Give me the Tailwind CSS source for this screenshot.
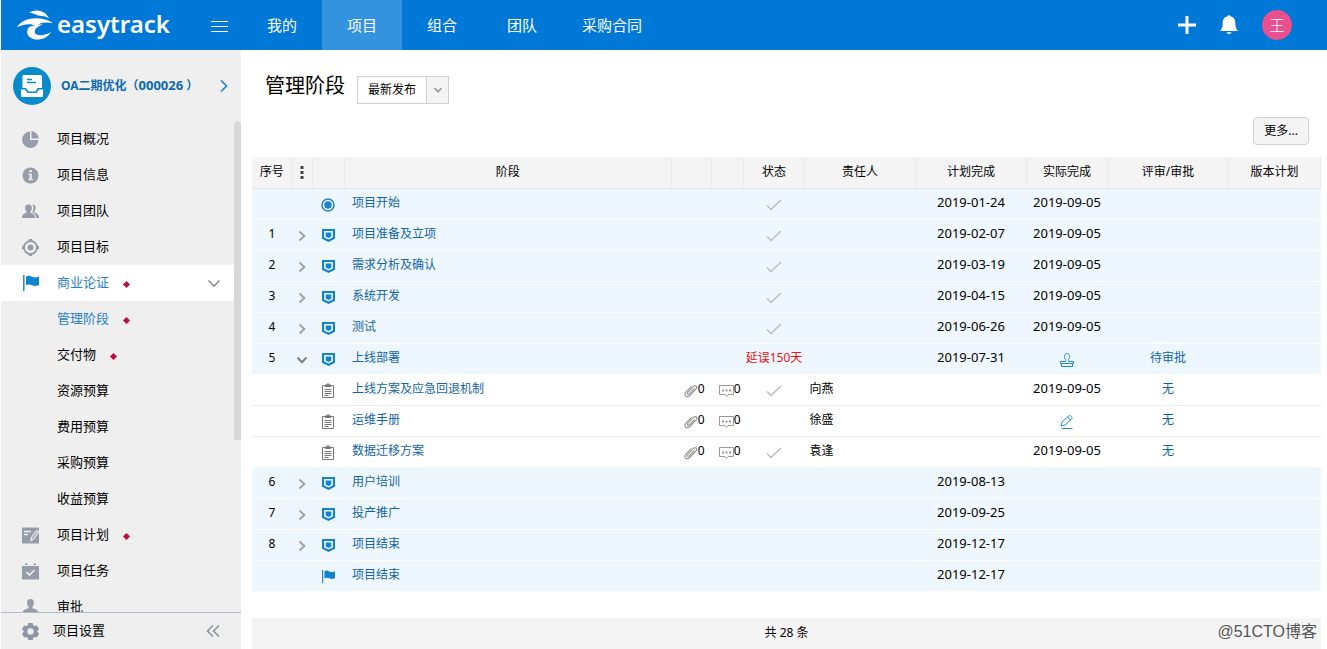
<!DOCTYPE html>
<html lang="zh-CN">
<head>
<meta charset="utf-8">
<title>管理阶段 - easytrack</title>
<script src="https://cdn.jsdelivr.net/npm/@tailwindcss/browser@4"></script>
</head>
<body class="h-screen overflow-hidden bg-white pl-px font-['Noto_Sans','Noto_Sans_CJK_SC',sans-serif] text-[13px] text-black">
<svg class="hidden">
  <symbol id="chev" viewBox="0 0 10 12"><path d="M2.5 1.5 7.3 6 2.5 10.5" fill="none" stroke="currentColor" stroke-width="2"/></symbol>
  <symbol id="down" viewBox="0 0 12 10"><path d="M1.5 2.5 6 7.3 10.5 2.5" fill="none" stroke="currentColor" stroke-width="2"/></symbol>
  <symbol id="stage" viewBox="0 0 14 14"><path d="M0 0h14v10.5L7 14 0 10.5zM2.300 2.200v6.900L7 11.400l4.700-2.300V2.200z" fill="currentColor" fill-rule="evenodd"/><path d="M4 3.800h6v4.400L7 9.600 4 8.200z" fill="currentColor"/></symbol>
  <symbol id="start" viewBox="0 0 14 14"><circle cx="7" cy="7" r="6" fill="none" stroke="currentColor" stroke-width="1.500"/><circle cx="7" cy="7" r="3.700" fill="currentColor"/></symbol>
  <symbol id="flag" viewBox="0 0 16 16"><path d="M.8 0v16" stroke="currentColor" stroke-width="1.400"/><path d="M3 1.500c2-1.300 4-.8 6 .2s4 1 7-.2v8.500c-3 1.300-5 1.200-7 .3s-4-1.200-6 0z" fill="currentColor"/></symbol>
  <symbol id="doc" viewBox="0 0 14 15"><g fill="none" stroke="currentColor"><path d="M4 2.500H1.500v12h11v-12H10M3.500 6.500h7M3.500 8.500h7M3.500 10.500h7M3.500 12.500h4"/></g><path d="M4 1.500h1.800V.5h2.400v1H10V4H4z" fill="currentColor"/></symbol>
  <symbol id="check" viewBox="0 0 16 12"><path d="m1 6.500 4 4L15 1" fill="none" stroke="currentColor" stroke-width="1.500"/></symbol>
  <symbol id="clip" viewBox="0 0 14 14"><path d="m10.500 4.500-5.200 5.300c-1.400 1.300-2.900-.2-1.600-1.500l5.600-5.700c2.300-2.200 4.800.3 2.700 2.600l-6.200 6.300c-3.200 3-6.600-.4-3.700-3.600L7.500 2.400" fill="none" stroke="currentColor" stroke-width="1.200"/></symbol>
  <symbol id="msg" viewBox="0 0 15 14"><path d="M.5 1.500h14v9H9l-1.500 2-1.500-2H.5z" fill="none" stroke="currentColor"/><path d="M3 5.500h2v2H3zM6.500 5.500h2v2h-2zM10 5.500h2v2h-2z" fill="currentColor"/></symbol>
</svg>
<div class="flex h-full flex-col">
  <header class="flex h-[50px] shrink-0 items-center bg-[#0078d7] text-white">
    <a href="#" class="flex w-[210px] items-center pl-4">
      <svg class="h-8 w-10 shrink-0" viewBox="0 0 40 32" fill="#fff"><path d="M12 3.500C20-1 29 2 32 9.500c-4-3.500-7-1.500-11-3-3-1.300-6-2.500-9-3z"/><path d="M0 18C6 9 22 6 36 14c-8-1-12-1-17 3-5-3-12-2-19 1z"/><path d="M12 18c5-2 9-2.500 14-2.500-7 2.500-9 5.500-8 8.500s10 3 16-1c-4 8-17 10-22 4.500-3-3.500-2-6.500 0-9.500z"/></svg>
      <span class="-mt-0.5 text-2xl font-semibold">easytrack</span>
    </a>
    <button aria-label="菜单" class="w-[31px]"><svg class="mt-px h-3 w-[17px]" viewBox="0 0 17 12"><path d="M0 1.500h17M0 6.500h17M0 11.500h17" stroke="#fff"/></svg></button>
    <nav class="flex h-full flex-1 text-[15px]">
      <a href="#" class="flex min-w-20 items-center justify-center px-5">我的</a>
      <a href="#" class="flex min-w-20 items-center justify-center bg-[#3393df] px-5">项目</a>
      <a href="#" class="flex min-w-20 items-center justify-center px-5">组合</a>
      <a href="#" class="flex min-w-20 items-center justify-center px-5">团队</a>
      <a href="#" class="flex min-w-20 items-center justify-center px-5">采购合同</a>
    </nav>
    <div class="flex items-center gap-6 pr-[35px]">
      <button aria-label="新增"><svg class="block size-[18px]" viewBox="0 0 18 18"><path d="M9 0v18M0 9h18" stroke="#fff" stroke-width="3"/></svg></button>
      <button aria-label="通知"><svg class="block h-5 w-[18px]" viewBox="0 0 18 20" fill="#fff"><path d="M7.500 1.200C7.700-.1 10.300-.1 10.500 1.200 14 2 15.300 4.500 15.300 8c0 4 .8 5.500 2.500 8H.2c1.700-2.500 2.500-4 2.500-8 0-3.500 1.300-6 4.800-6.800zM6.500 17.200h5c-.5 2.300-4.500 2.300-5 0z"/></svg></button>
      <button class="size-[30px] rounded-full bg-[#ea5090] text-[15px] font-light">王</button>
    </div>
  </header>
  <div class="flex min-h-0 flex-1">
    <aside class="flex w-60 shrink-0 flex-col bg-[#efefef]">
      <a href="#" class="flex h-[71px] shrink-0 items-center pr-3 pl-3 font-bold text-[#0c6bb0]">
        <svg class="mr-[10px] size-[38px] shrink-0" viewBox="0 0 38 38"><circle cx="19" cy="19" r="19" fill="#088acb"/><path d="M10.500 8h17q1.500 0 1.500 1.500V21h-4.500l-2 3.500h-7L13 21H9.500V9.500Q9.500 8 10.500 8z" fill="#fff"/><path d="M14 12.500h5M14 15.500h9" stroke="#088acb" stroke-width="1.300"/><path d="M8 22.500h4l2.500 3.500h9l2.500-3.500h4V30H8z" fill="#fff"/></svg>
        <span class="flex-1 text-xs whitespace-nowrap">OA二期优化（<span class="text-[13px]">000026</span> ）</span>
        <svg class="h-[14px] w-[10px] text-[#2b80c4]" viewBox="0 0 10 14"><path d="m2 1.500 5.500 5.500L2 12.500" fill="none" stroke="currentColor" stroke-width="1.700"/></svg>
      </a>
      <div class="flex min-h-0 flex-1 overflow-hidden">
        <nav class="flex-1">
          <a href="#" class="flex h-9 items-center pl-[21px]"><svg class="mr-[18px] size-[17px] text-[#979da8]" viewBox="0 0 17 17" fill="currentColor"><path d="M8 .5V9h8.500A8.200 8.200 0 1 1 8 .5z"/><path d="M9.500 0a8 8 0 0 1 7.200 7.500H9.500z"/></svg>项目概况</a>
          <a href="#" class="flex h-9 items-center pl-[21px]"><svg class="mr-[18px] size-[17px] text-[#979da8]" viewBox="0 0 17 17"><circle cx="8.500" cy="8.500" r="8" fill="currentColor"/><path d="M7.300 3h2.500v2.200H7.300zM6.300 6.700h3.500v5.200H11v1.300H6.300v-1.300h1.200V8H6.300z" fill="#efefef"/></svg>项目信息</a>
          <a href="#" class="flex h-9 items-center pl-[21px]"><svg class="mr-[18px] size-[17px] text-[#979da8]" viewBox="0 0 17 17" fill="currentColor"><path d="M6.500 1.500c2.300 0 3.500 1.500 3.300 3.500-.1 1.500-.6 2.500-1.300 3.300v1.500c1.800.8 4.500 1.400 4.500 5.200H0c0-3.800 2.700-4.400 4.500-5.200V8.300C3.700 7.500 3.300 6.500 3.200 5c-.1-2 1-3.500 3.300-3.500z"/><path d="M10.500 1.500c4.200.2 3.700 5 1.700 7v1c2.200.8 4.800 1.500 4.800 5.500h-3c0-3-1.300-4.500-3.800-5.500 1.200-2.500 2-5.500.3-8z"/></svg>项目团队</a>
          <a href="#" class="flex h-9 items-center pl-[21px]"><svg class="mr-[18px] size-[17px] text-[#979da8]" viewBox="0 0 17 17"><circle cx="8.500" cy="8.500" r="6.500" fill="none" stroke="currentColor" stroke-width="2"/><circle cx="8.500" cy="8.500" r="3" fill="currentColor"/><path d="M8.500 0v2.500M8.500 14.500V17M0 8.500h2.500M14.500 8.500H17" stroke="currentColor" stroke-width="3"/></svg>项目目标</a>
          <a href="#" class="flex h-9 items-center bg-white pr-3 pl-[22px] text-[#2480c8]"><svg class="mr-[18px] size-4 text-[#0f84d0]"><use href="#flag"/></svg>商业论证<i class="mt-0.5 ml-[15px] size-[5px] rotate-45 bg-[#c00d3f]"></i><svg class="ml-auto h-4 w-4 text-[#8a8f96]" viewBox="0 0 16 16"><path d="m2.500 5.500 5.500 5.500 5.500-5.500" fill="none" stroke="currentColor" stroke-width="1.600"/></svg></a>
          <a href="#" class="flex h-9 items-center pl-14 text-[#2480c8]">管理阶段<i class="mt-0.5 ml-[15px] size-[5px] rotate-45 bg-[#c00d3f]"></i></a>
          <a href="#" class="flex h-9 items-center pl-14">交付物<i class="mt-0.5 ml-[15px] size-[5px] rotate-45 bg-[#c00d3f]"></i></a>
          <a href="#" class="flex h-9 items-center pl-14">资源预算</a>
          <a href="#" class="flex h-9 items-center pl-14">费用预算</a>
          <a href="#" class="flex h-9 items-center pl-14">采购预算</a>
          <a href="#" class="flex h-9 items-center pl-14">收益预算</a>
          <a href="#" class="flex h-9 items-center pl-[21px]"><svg class="mr-[18px] size-[17px] text-[#979da8]" viewBox="0 0 17 17"><path d="M0 .5h17v16H0z" fill="currentColor"/><path d="M2 4.500h7M2 7.500h4" stroke="#efefef" stroke-width="1.300"/><path d="m9 13.500.6-3L14 4.300c1-1 2.700 0 2 1.400L11.500 12z" fill="none" stroke="#efefef" stroke-width="1.200"/></svg>项目计划<i class="mt-0.5 ml-[15px] size-[5px] rotate-45 bg-[#c00d3f]"></i></a>
          <a href="#" class="flex h-9 items-center pl-[21px]"><svg class="mr-[18px] size-[17px] text-[#979da8]" viewBox="0 0 17 17"><path d="M0 3h17v13.500H0zM3 .5h2.500V2H3zM11.500.5H14V2h-2.500z" fill="currentColor"/><path d="m4.500 9 3 3 5-5" fill="none" stroke="#efefef" stroke-width="1.600"/></svg>项目任务</a>
          <a href="#" class="flex h-9 items-center pl-[21px]"><svg class="mr-[18px] size-[17px] text-[#979da8]" viewBox="0 0 17 17" fill="currentColor"><path d="M8.500 0c2.500 0 3.700 1.700 3.500 3.700-.2 2-.8 3-1.500 3.800v1.800c2 1 5.500 1 6 4.700V17H.5v-3c.5-3.700 4-3.700 6-4.700V7.500C5.800 6.700 5.200 5.700 5 3.700 4.800 1.700 6 0 8.500 0z"/></svg>审批</a>
        </nav>
        <div class="h-[319px] w-[7px] rounded-t bg-[#d8d8d8]"></div>
      </div>
      <div class="flex h-[37px] shrink-0 items-center border-t border-[#b4b9cb] pr-[21px] pl-[21px]">
        <a href="#" class="flex items-center"><svg class="mr-[14px] size-[17px] text-[#8f96a3]" viewBox="0 0 17 17"><path d="m6.300 0h4.400l.6 2.300 1.300.8 2.300-.7 2.100 3.700L15.400 8v1.100l1.600 1.700-2.100 3.700-2.300-.6-1.300.8-.6 2.300H6.300l-.6-2.300-1.300-.8-2.300.6L0 10.800l1.600-1.700V8L0 6.100l2.100-3.700 2.300.7 1.300-.8zM8.500 5.300a3.200 3.200 0 1 0 0 6.400 3.200 3.200 0 0 0 0-6.400z" fill="currentColor" fill-rule="evenodd"/></svg>项目设置</a>
        <button aria-label="收起" class="ml-auto text-[#8a8f9a]"><svg class="block h-3 w-[14px]" viewBox="0 0 14 12"><path d="M7 .5 1.500 6 7 11.500M13 .5 7.500 6l5.500 5.500" fill="none" stroke="currentColor" stroke-width="1.500"/></svg></button>
      </div>
    </aside>
    <main class="flex min-w-0 flex-1 flex-col pr-[6px] pl-[11px]">
      <div class="flex h-[67px] shrink-0 items-center pt-1 pl-[13px]">
        <h1 class="mr-3 text-xl">管理阶段</h1>
        <div class="relative mt-2">
          <select aria-label="版本" class="h-7 w-[92px] appearance-none border border-[#cfcfcf] bg-white pl-[10px] text-xs"><option>最新发布</option></select>
          <span class="pointer-events-none absolute inset-y-px right-px flex w-[22px] items-center justify-center border-l border-[#cfcfcf] bg-[#f4f4f4] text-[#999]"><svg class="h-[8px] w-[10px]"><use href="#down"/></svg></span>
        </div>
      </div>
      <div class="flex h-10 shrink-0 justify-end pr-3"><button class="h-7 rounded-sm border border-[#d2d2d2] bg-[#f4f4f4] px-[10px] text-xs">更多...</button></div>
      <table class="w-full table-fixed text-center text-xs">
        <colgroup><col class="w-10"><col class="w-5"><col class="w-8"><col><col class="w-10"><col class="w-8"><col class="w-[61px]"><col class="w-[111px]"><col class="w-[111px]"><col class="w-[81px]"><col class="w-[121px]"><col class="w-[92px]"></colgroup>
        <thead>
          <tr class="h-[31px] border-b border-[#e3e6ee] bg-[#f4f4f4] *:border-r *:border-[#e9e9e9] *:p-0 *:font-normal">
            <th>序号</th><th><svg class="mx-auto h-[13px] w-1" viewBox="0 0 4 13"><path d="M.5 0h3v3h-3zM.5 5h3v3h-3zM.5 10h3v3h-3z" fill="#444"/></svg></th><th></th><th>阶段</th><th></th><th></th><th>状态</th><th>责任人</th><th>计划完成</th><th>实际完成</th><th>评审/审批</th><th>版本计划</th>
          </tr>
        </thead>
        <tbody class="[&_a]:text-[#1264a8] [&_td]:p-0 [&_td]:pb-0.5 [&_time]:text-[13px]">
          <tr class="h-[31px] border-b border-white bg-[#eff7fe]"><td></td><td></td><td><svg class="mx-auto mt-1 size-[14px] text-[#2080cc]"><use href="#start"/></svg></td><td class="text-left"><a href="#" class="ml-2">项目开始</a></td><td></td><td></td><td><svg class="mx-auto mt-1 h-3 w-4 text-[#bcbcbc]"><use href="#check"/></svg></td><td></td><td><time>2019-01-24</time></td><td><time>2019-09-05</time></td><td></td><td></td></tr>
          <tr class="h-[31px] border-b border-white bg-[#eff7fe]"><td>1</td><td><svg class="mx-auto mt-1 h-3 w-[10px] text-[#a3a3a3]"><use href="#chev"/></svg></td><td><svg class="mx-auto mt-1 size-[13px] text-[#1283d0]"><use href="#stage"/></svg></td><td class="text-left"><a href="#" class="ml-2">项目准备及立项</a></td><td></td><td></td><td><svg class="mx-auto mt-1 h-3 w-4 text-[#bcbcbc]"><use href="#check"/></svg></td><td></td><td><time>2019-02-07</time></td><td><time>2019-09-05</time></td><td></td><td></td></tr>
          <tr class="h-[31px] border-b border-white bg-[#eff7fe]"><td>2</td><td><svg class="mx-auto mt-1 h-3 w-[10px] text-[#a3a3a3]"><use href="#chev"/></svg></td><td><svg class="mx-auto mt-1 size-[13px] text-[#1283d0]"><use href="#stage"/></svg></td><td class="text-left"><a href="#" class="ml-2">需求分析及确认</a></td><td></td><td></td><td><svg class="mx-auto mt-1 h-3 w-4 text-[#bcbcbc]"><use href="#check"/></svg></td><td></td><td><time>2019-03-19</time></td><td><time>2019-09-05</time></td><td></td><td></td></tr>
          <tr class="h-[31px] border-b border-white bg-[#eff7fe]"><td>3</td><td><svg class="mx-auto mt-1 h-3 w-[10px] text-[#a3a3a3]"><use href="#chev"/></svg></td><td><svg class="mx-auto mt-1 size-[13px] text-[#1283d0]"><use href="#stage"/></svg></td><td class="text-left"><a href="#" class="ml-2">系统开发</a></td><td></td><td></td><td><svg class="mx-auto mt-1 h-3 w-4 text-[#bcbcbc]"><use href="#check"/></svg></td><td></td><td><time>2019-04-15</time></td><td><time>2019-09-05</time></td><td></td><td></td></tr>
          <tr class="h-[31px] border-b border-white bg-[#eff7fe]"><td>4</td><td><svg class="mx-auto mt-1 h-3 w-[10px] text-[#a3a3a3]"><use href="#chev"/></svg></td><td><svg class="mx-auto mt-1 size-[13px] text-[#1283d0]"><use href="#stage"/></svg></td><td class="text-left"><a href="#" class="ml-2">测试</a></td><td></td><td></td><td><svg class="mx-auto mt-1 h-3 w-4 text-[#bcbcbc]"><use href="#check"/></svg></td><td></td><td><time>2019-06-26</time></td><td><time>2019-09-05</time></td><td></td><td></td></tr>
          <tr class="h-[31px] border-b border-white bg-[#eff7fe]"><td>5</td><td><svg class="mx-auto mt-1 h-[10px] w-3 text-[#808080]"><use href="#down"/></svg></td><td><svg class="mx-auto mt-1 size-[13px] text-[#1283d0]"><use href="#stage"/></svg></td><td class="text-left"><a href="#" class="ml-2">上线部署</a></td><td></td><td></td><td class="whitespace-nowrap text-[#ee1111]">延误150天</td><td></td><td><time>2019-07-31</time></td><td><button aria-label="审批" class="block w-full"><svg class="mx-auto mt-1 size-[14px] text-[#2289cc]" viewBox="0 0 14 14" fill="none" stroke="currentColor"><path d="M5.500 8.500c.5-1.500.2-2-.6-3C3.500 3 5 .5 7 .5s3.500 2.500 2.100 5c-.8 1-1.100 1.500-.6 3h5v2H.5v-2zM1.500 11v2.500h11V11"/></svg></button></td><td><a href="#">待审批</a></td><td></td></tr>
          <tr class="h-[31px] border-b border-[#ececec]"><td></td><td></td><td><svg class="mx-auto mt-1 h-[15px] w-[14px] text-[#777]"><use href="#doc"/></svg></td><td class="text-left"><a href="#" class="ml-2">上线方案及应急回退机制</a></td><td><span class="flex items-center justify-end pr-[7px]"><svg class="mt-1 size-[14px] text-[#999]"><use href="#clip"/></svg>0</span></td><td><span class="flex items-center justify-end pr-[3px]"><svg class="mt-1 h-[14px] w-[15px] shrink-0 text-[#999]"><use href="#msg"/></svg>0</span></td><td><svg class="mx-auto mt-1 h-3 w-4 text-[#bcbcbc]"><use href="#check"/></svg></td><td class="text-left"><span class="ml-[5px]">向燕</span></td><td></td><td><time>2019-09-05</time></td><td><a href="#">无</a></td><td></td></tr>
          <tr class="h-[31px] border-b border-[#ececec]"><td></td><td></td><td><svg class="mx-auto mt-1 h-[15px] w-[14px] text-[#777]"><use href="#doc"/></svg></td><td class="text-left"><a href="#" class="ml-2">运维手册</a></td><td><span class="flex items-center justify-end pr-[7px]"><svg class="mt-1 size-[14px] text-[#999]"><use href="#clip"/></svg>0</span></td><td><span class="flex items-center justify-end pr-[3px]"><svg class="mt-1 h-[14px] w-[15px] shrink-0 text-[#999]"><use href="#msg"/></svg>0</span></td><td></td><td class="text-left"><span class="ml-[5px]">徐盛</span></td><td></td><td><button aria-label="编辑" class="block w-full"><svg class="mx-auto mt-1 size-[14px] text-[#2289cc]" viewBox="0 0 14 14" fill="none" stroke="currentColor"><path d="M1.500 13.500h11M1 11l1-4L8.800.9c1.200-1 4.200 1.200 3 2.900L5 10zM7.500 2.200l3.200 2.800"/></svg></button></td><td><a href="#">无</a></td><td></td></tr>
          <tr class="h-[31px] border-b border-[#eff7fe]"><td></td><td></td><td><svg class="mx-auto mt-1 h-[15px] w-[14px] text-[#777]"><use href="#doc"/></svg></td><td class="text-left"><a href="#" class="ml-2">数据迁移方案</a></td><td><span class="flex items-center justify-end pr-[7px]"><svg class="mt-1 size-[14px] text-[#999]"><use href="#clip"/></svg>0</span></td><td><span class="flex items-center justify-end pr-[3px]"><svg class="mt-1 h-[14px] w-[15px] shrink-0 text-[#999]"><use href="#msg"/></svg>0</span></td><td><svg class="mx-auto mt-1 h-3 w-4 text-[#bcbcbc]"><use href="#check"/></svg></td><td class="text-left"><span class="ml-[5px]">袁逢</span></td><td></td><td><time>2019-09-05</time></td><td><a href="#">无</a></td><td></td></tr>
          <tr class="h-[31px] border-b border-white bg-[#eff7fe]"><td>6</td><td><svg class="mx-auto mt-1 h-3 w-[10px] text-[#a3a3a3]"><use href="#chev"/></svg></td><td><svg class="mx-auto mt-1 size-[13px] text-[#1283d0]"><use href="#stage"/></svg></td><td class="text-left"><a href="#" class="ml-2">用户培训</a></td><td></td><td></td><td></td><td></td><td><time>2019-08-13</time></td><td></td><td></td><td></td></tr>
          <tr class="h-[31px] border-b border-white bg-[#eff7fe]"><td>7</td><td><svg class="mx-auto mt-1 h-3 w-[10px] text-[#a3a3a3]"><use href="#chev"/></svg></td><td><svg class="mx-auto mt-1 size-[13px] text-[#1283d0]"><use href="#stage"/></svg></td><td class="text-left"><a href="#" class="ml-2">投产推广</a></td><td></td><td></td><td></td><td></td><td><time>2019-09-25</time></td><td></td><td></td><td></td></tr>
          <tr class="h-[31px] border-b border-white bg-[#eff7fe]"><td>8</td><td><svg class="mx-auto mt-1 h-3 w-[10px] text-[#a3a3a3]"><use href="#chev"/></svg></td><td><svg class="mx-auto mt-1 size-[13px] text-[#1283d0]"><use href="#stage"/></svg></td><td class="text-left"><a href="#" class="ml-2">项目结束</a></td><td></td><td></td><td></td><td></td><td><time>2019-12-17</time></td><td></td><td></td><td></td></tr>
          <tr class="h-[31px] border-b border-white bg-[#eff7fe]"><td></td><td></td><td><svg class="mx-auto mt-1 size-[13px] text-[#1283d0]"><use href="#flag"/></svg></td><td class="text-left"><a href="#" class="ml-2">项目结束</a></td><td></td><td></td><td></td><td></td><td><time>2019-12-17</time></td><td></td><td></td><td></td></tr>
        </tbody>
      </table>
      <footer class="relative mt-auto flex h-[31px] shrink-0 items-center justify-center bg-[#f4f4f4] pb-px text-xs">共 28 条<span class="absolute right-1 bottom-[5px] font-['Liberation_Sans','Noto_Sans_CJK_SC',sans-serif] text-base text-[#555]">@51CTO博客</span></footer>
    </main>
  </div>
</div>
</body>
</html>
